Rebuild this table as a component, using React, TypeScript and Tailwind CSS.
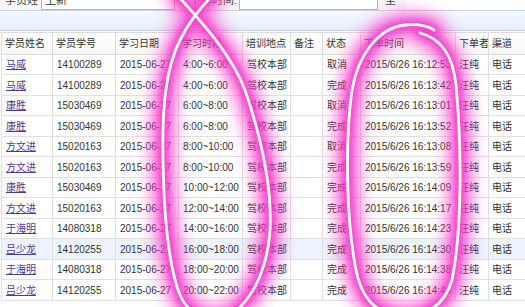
const rows = [
  ["马威", "14100289", "4:00~6:00", "取消", "16:12:53"],
  ["马威", "14100289", "4:00~6:00", "完成", "16:13:42"],
  ["康胜", "15030469", "6:00~8:00", "取消", "16:13:01"],
  ["康胜", "15030469", "6:00~8:00", "完成", "16:13:52"],
  ["方文进", "15020163", "8:00~10:00", "取消", "16:13:08"],
  ["方文进", "15020163", "8:00~10:00", "完成", "16:13:59"],
  ["康胜", "15030469", "10:00~12:00", "完成", "16:14:09"],
  ["方文进", "15020163", "12:00~14:00", "完成", "16:14:17"],
  ["于海明", "14080318", "14:00~16:00", "完成", "16:14:23"],
  ["吕少龙", "14120255", "16:00~18:00", "完成", "16:14:30"],
  ["于海明", "14080318", "18:00~20:00", "完成", "16:14:38"],
  ["吕少龙", "14120255", "20:00~22:00", "完成", "16:14:44"],
];

const headers = ["学员姓名", "学员学号", "学习日期", "学习时段", "培训地点", "备注", "状态", "下单时间", "下单者", "渠道"];
const widths = ["w-[51px]", "w-[63px]", "w-[63px]", "w-[64px]", "w-[48px]", "w-[32px]", "w-[38px]", "w-[95px]", "w-[33px]", "w-[60px]"];

const leftLoop =
  "M 178 -4 C 200 20, 232 55, 245 90 C 262 140, 272 190, 270 230 C 268 265, 255 295, 235 312 C 215 325, 190 318, 180 295 C 170 270, 164 220, 163 160 C 162 110, 165 70, 180 40 C 190 20, 200 8, 212 -4";
const rightLoop =
  "M 420 33 C 440 38, 453 55, 456 85 C 462 150, 462 230, 452 280 C 445 305, 425 318, 400 316 C 378 314, 362 300, 356 270 C 346 220, 345 140, 352 90 C 358 55, 378 28, 405 25 C 418 24, 428 26, 434 30";

function Glow() {
  return (
    <svg className="absolute inset-0 pointer-events-none" width="525" height="307" viewBox="0 0 525 307">
      <defs>
        <filter id="wide" x="-30%" y="-30%" width="160%" height="160%">
          <feGaussianBlur stdDeviation="8" />
        </filter>
        <filter id="mid" x="-30%" y="-30%" width="160%" height="160%">
          <feGaussianBlur stdDeviation="3" />
        </filter>
        <filter id="soft" x="-30%" y="-30%" width="160%" height="160%">
          <feGaussianBlur stdDeviation="0.6" />
        </filter>
      </defs>
      {[leftLoop, rightLoop].map((d) => (
        <g key={d} fill="none" strokeLinecap="round">
          <path d={d} stroke="#ff30c8" strokeWidth="24" opacity="0.7" filter="url(#wide)" />
          <path d={d} stroke="#ee3fd0" strokeWidth="10" opacity="0.85" filter="url(#mid)" />
          <path d={d} stroke="#ffffff" strokeWidth="2.8" filter="url(#soft)" />
        </g>
      ))}
    </svg>
  );
}

export default function App() {
  return (
    <div className="relative w-[525px] h-[307px] overflow-hidden bg-white text-[#333] font-['Liberation_Sans','Noto_Sans_CJK_SC',sans-serif]">
      {/* search bar, cut at the top */}
      <div className="h-[10px] overflow-hidden flex items-end bg-[#f7f7f7] text-[11px]">
        <div className="w-[38px] h-[20px] shrink-0 text-right leading-[20px] text-[#444]">学员姓名:</div>
        <div className="ml-[3px] w-[134px] h-[20px] shrink-0 bg-white border border-[#b5b5b5] px-[3px] leading-[18px]">王新</div>
        <div className="ml-[5px] w-[57px] h-[20px] shrink-0 text-right leading-[20px] text-[#444]">下单时间:</div>
        <div className="ml-[2px] w-[139px] h-[20px] shrink-0 bg-white border border-[#b5b5b5]" />
        <div className="ml-[7px] h-[20px] shrink-0 leading-[20px] text-[#444]">至</div>
        <div className="ml-[10px] flex-1 h-[20px] bg-white" />
      </div>

      {/* toolbar band */}
      <div className="h-[21px] border-t border-b border-[#c5d4e6] bg-gradient-to-b from-[#f5f9fe] to-[#e4eef9]" />

      <div className="pl-[1px] pt-[1px]">
        <table className="table-fixed border-collapse text-[10px] w-[547px]">
          <colgroup>
            {widths.map((w, i) => (
              <col key={i} className={w} />
            ))}
          </colgroup>
          <thead>
            <tr className="h-[22px] bg-gradient-to-b from-white to-[#f6f6f6]">
              {headers.map((h) => (
                <th key={h} className="border border-[#dcdcdc] px-[3px] text-left font-normal whitespace-nowrap overflow-hidden">
                  {h}
                </th>
              ))}
            </tr>
          </thead>
          <tbody>
            {rows.map((r, i) => (
              <tr key={i} className={`${i % 2 === 0 ? "h-[20px]" : "h-[21px]"} ${i === 9 ? "bg-[#edf3fc]" : "bg-white"}`}>
                <td className="border border-[#e0e0e0] px-[4px] whitespace-nowrap">
                  <span className="text-[#4b3a98] underline">{r[0]}</span>
                </td>
                <td className="border border-[#e0e0e0] px-[4px] whitespace-nowrap">{r[1]}</td>
                <td className="border border-[#e0e0e0] px-[4px] whitespace-nowrap">2015-06-27</td>
                <td className="border border-[#e0e0e0] px-[4px] whitespace-nowrap">{r[2]}</td>
                <td className="border border-[#e0e0e0] px-[4px] whitespace-nowrap">驾校本部</td>
                <td className="border border-[#e0e0e0] px-[4px]" />
                <td className="border border-[#e0e0e0] px-[4px] whitespace-nowrap">{r[3]}</td>
                <td className="border border-[#e0e0e0] px-[4px] whitespace-nowrap">2015/6/26 {r[4]}</td>
                <td className="border border-[#e0e0e0] px-[3px] whitespace-nowrap">汪纯</td>
                <td className="border border-[#e0e0e0] px-[3px] whitespace-nowrap">电话</td>
              </tr>
            ))}
          </tbody>
        </table>
      </div>

      <Glow />
    </div>
  );
}
